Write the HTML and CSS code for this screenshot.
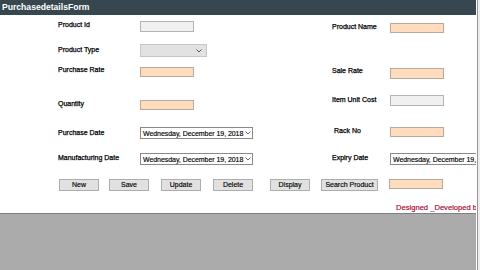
FILE: index.html
```html
<!DOCTYPE html>
<html>
<head>
<meta charset="utf-8">
<link rel="stylesheet" href="styles.css">
</head>
<body>
<div class="screen">
  <div class="main">
    <div class="window">
      <div class="titlebar">PurchasedetailsForm</div>
      <div class="fields">
        <div class="lbl">Product Id</div>
        <div><div class="box grey h11"></div></div>
        <div class="lbl mt2">Product Name</div>
        <div><div class="box peach mt2"></div></div>

        <div class="lbl mt2">Product Type</div>
        <div><div class="combo"><svg class="chev" width="6" height="4" viewBox="0 0 6 4"><path d="M0.5 0.5 L3 3 L5.5 0.5" fill="none" stroke="#555" stroke-width="1"/></svg></div></div>
        <div></div>
        <div></div>

        <div class="lbl">Purchase Rate</div>
        <div><div class="box peach mt1"></div></div>
        <div class="lbl mt1">Sale Rate</div>
        <div><div class="box peach h11 mt2"></div></div>

        <div class="lbl mt5">Quantity</div>
        <div><div class="box peach mt5"></div></div>
        <div class="lbl mt1">Item Unit Cost</div>
        <div><div class="box grey h11"></div></div>

        <div class="lbl mt2">Purchase Date</div>
        <div><div class="picker"><span class="ptext">Wednesday, December 19, 2018</span><svg class="pchev" width="6" height="4" viewBox="0 0 6 4"><path d="M0.5 0.5 L3 3 L5.5 0.5" fill="none" stroke="#444" stroke-width="0.8"/></svg></div></div>
        <div class="lbl ml2">Rack No</div>
        <div><div class="box peach"></div></div>

        <div class="lbl mt1">Manufacturing Date</div>
        <div><div class="picker"><span class="ptext">Wednesday, December 19, 2018</span><svg class="pchev" width="6" height="4" viewBox="0 0 6 4"><path d="M0.5 0.5 L3 3 L5.5 0.5" fill="none" stroke="#444" stroke-width="0.8"/></svg></div></div>
        <div class="lbl mt1">Expiry Date</div>
        <div class="clip"><div class="picker"><span class="ptext">Wednesday, December 19, 2018</span><svg class="pchev" width="6" height="4" viewBox="0 0 6 4"><path d="M0.5 0.5 L3 3 L5.5 0.5" fill="none" stroke="#444" stroke-width="0.8"/></svg></div></div>
      </div>
      <div class="buttons">
        <div class="btn">New</div>
        <div class="btn g10">Save</div>
        <div class="btn g12">Update</div>
        <div class="btn g12">Delete</div>
        <div class="btn g17">Display</div>
        <div class="btn g11 wide">Search Product</div>
        <div class="box peach g11"></div>
      </div>
      <div class="credit">Designed _Developed by</div>
    </div>
    <div class="workspace"></div>
  </div>
  <div class="edge"></div>
</div>
</body>
</html>
```
FILE: styles.css
```css
* { box-sizing: border-box; }
html, body { margin: 0; padding: 0; }
body {
  width: 480px;
  height: 270px;
  overflow: hidden;
  font-family: "Liberation Sans", Arial, sans-serif;
  background: #ababab;
}
.screen { display: flex; width: 480px; height: 270px; }
.main { width: 476px; display: flex; flex-direction: column; }
.edge {
  width: 4px;
  background: #ececec;
  border-left: 1px solid #fafafa;
  box-shadow: inset 1px 0 0 #9a9a9a;
}
.window {
  height: 213px;
  background: #ffffff;
  overflow: hidden;
}
.titlebar {
  height: 15px;
  background: #37474f;
  color: #ffffff;
  font-weight: bold;
  font-size: 8.6px;
  line-height: 15px;
  padding-left: 2px;
}
.fields {
  display: grid;
  grid-template-columns: 82px 192px 58px 86px;
  grid-template-rows: 23px 22px 29px 32px 26px 13px;
  padding: 6px 0 0 58px;
}
.lbl {
  font-size: 7px;
  line-height: 7px;
  color: #000;
  white-space: nowrap;
  -webkit-text-stroke: 0.25px #000;
}
.box {
  width: 54px;
  height: 10px;
  border: 1px solid #a6a6a6;
}
.h11 { height: 11px; }
.grey { background: #f0f0f0; border-color: #b4b4b4; }
.peach { background: #fedcbd; border-color: #b9a99a; }
.combo {
  width: 67px;
  height: 13px;
  background: #e2e2e2;
  border: 1px solid #c6c6c6;
  display: flex;
  align-items: center;
  justify-content: flex-end;
  padding-right: 4px;
}
.picker {
  width: 113px;
  height: 12px;
  border: 1px solid #8a8a8a;
  background: #fff;
  display: flex;
  align-items: center;
  justify-content: space-between;
  padding: 0 3px 0 2px;
  font-size: 7px;
  letter-spacing: -0.05px;
  color: #000;
  white-space: nowrap;
  -webkit-text-stroke: 0.15px #000;
}
.pchev { flex: none; margin-left: 2px; }
.mt1 { margin-top: 1px; }
.mt2 { margin-top: 2px; }
.mt5 { margin-top: 5px; }
.ml2 { margin-left: 2px; }
.buttons {
  display: flex;
  align-items: flex-start;
  padding: 13px 0 0 59px;
}
.btn {
  width: 40px;
  height: 12px;
  background: #e1e1e1;
  border: 1px solid #adadad;
  font-size: 7px;
  line-height: 10px;
  text-align: center;
  color: #000;
  -webkit-text-stroke: 0.15px #000;
}
.btn.wide { width: 57px; }
.g10 { margin-left: 10px; }
.g11 { margin-left: 11px; }
.g12 { margin-left: 12px; }
.g17 { margin-left: 17px; }
.credit {
  margin: 13px 0 0 396px;
  font-size: 7.6px;
  line-height: 8px;
  color: #a8002a;
  white-space: nowrap;
  -webkit-text-stroke: 0.15px #a8002a;
}
.workspace {
  flex: 1;
  background: #ababab;
  border-top: 1px solid #808080;
}
```
